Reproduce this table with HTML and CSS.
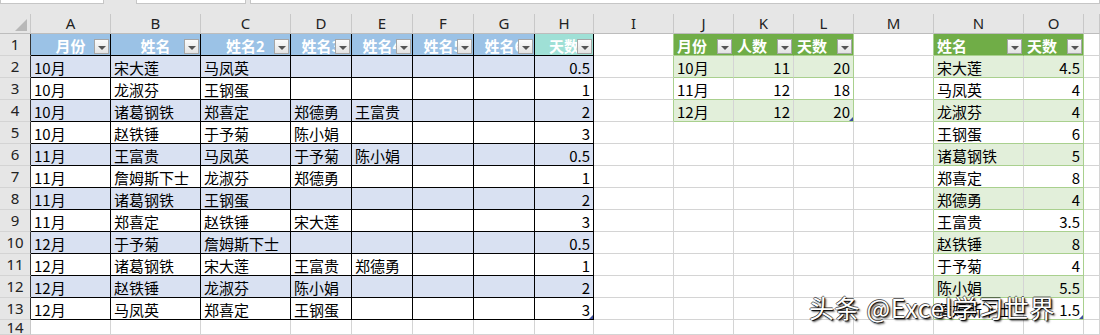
FILE: index.html
```html
<!DOCTYPE html>
<html lang="zh-CN">
<head>
<meta charset="utf-8">
<title>Excel</title>
<link rel="stylesheet" href="styles.css">
</head>
<body>
<div class="topbar"><span class="box b1x"></span><span class="box b2x"></span><span class="box b3x"></span></div>
<div class="sheet">
  <div class="ch corner"><span class="tri"></span></div><div class="ch">A</div><div class="ch">B</div><div class="ch">C</div><div class="ch">D</div><div class="ch">E</div><div class="ch">F</div><div class="ch">G</div><div class="ch">H</div><div class="ch">I</div><div class="ch">J</div><div class="ch">K</div><div class="ch">L</div><div class="ch">M</div><div class="ch">N</div><div class="ch">O</div><div class="ch"></div>

  <div class="rh tk">1</div><div class="k hb">月份<span class="fb"></span></div><div class="k hb">姓名<span class="fb"></span></div><div class="k hb">姓名2<span class="fb"></span></div><div class="k hb">姓名3<span class="fb"></span></div><div class="k hb">姓名4<span class="fb"></span></div><div class="k hb">姓名5<span class="fb"></span></div><div class="k hb">姓名6<span class="fb"></span></div><div class="k ht">天数<span class="fb"></span></div><div class="pg"></div><div class="gh">月份<span class="fb"></span></div><div class="gh">人数<span class="fb"></span></div><div class="gh gl">天数<span class="fb"></span></div><div class="pg"></div><div class="gh">姓名<span class="fb"></span></div><div class="gh gl">天数<span class="fb"></span></div><div></div>

  <div class="rh tk">2</div><div class="k kb">10月</div><div class="k kb">宋大莲</div><div class="k kb">马凤英</div><div class="k kb"></div><div class="k kb"></div><div class="k kb"></div><div class="k kb"></div><div class="k kb n">0.5</div><div class="pg"></div><div class="g gb">10月</div><div class="g gb n">11</div><div class="g gb gl n">20</div><div class="pg"></div><div class="g gb">宋大莲</div><div class="g gb gl n">4.5</div><div></div>

  <div class="rh tk">3</div><div class="k">10月</div><div class="k">龙淑芬</div><div class="k">王钢蛋</div><div class="k"></div><div class="k"></div><div class="k"></div><div class="k"></div><div class="k n">1</div><div class="pg"></div><div class="g">11月</div><div class="g n">12</div><div class="g gl n">18</div><div class="pg"></div><div class="g">马凤英</div><div class="g gl n">4</div><div></div>

  <div class="rh tk">4</div><div class="k kb">10月</div><div class="k kb">诸葛钢铁</div><div class="k kb">郑喜定</div><div class="k kb">郑德勇</div><div class="k kb">王富贵</div><div class="k kb"></div><div class="k kb"></div><div class="k kb n">2</div><div class="pg"></div><div class="g gb">12月</div><div class="g gb n">12</div><div class="g gb gl n mark">20</div><div class="pg"></div><div class="g gb">龙淑芬</div><div class="g gb gl n">4</div><div></div>

  <div class="rh tk">5</div><div class="k">10月</div><div class="k">赵铁锤</div><div class="k">于予菊</div><div class="k">陈小娟</div><div class="k"></div><div class="k"></div><div class="k"></div><div class="k n">3</div><div></div><div></div><div></div><div></div><div class="pg"></div><div class="g">王钢蛋</div><div class="g gl n">6</div><div></div>

  <div class="rh tk">6</div><div class="k kb">11月</div><div class="k kb">王富贵</div><div class="k kb">马凤英</div><div class="k kb">于予菊</div><div class="k kb">陈小娟</div><div class="k kb"></div><div class="k kb"></div><div class="k kb n">0.5</div><div></div><div></div><div></div><div></div><div class="pg"></div><div class="g gb">诸葛钢铁</div><div class="g gb gl n">5</div><div></div>

  <div class="rh tk">7</div><div class="k">11月</div><div class="k">詹姆斯下士</div><div class="k">龙淑芬</div><div class="k">郑德勇</div><div class="k"></div><div class="k"></div><div class="k"></div><div class="k n">1</div><div></div><div></div><div></div><div></div><div class="pg"></div><div class="g">郑喜定</div><div class="g gl n">8</div><div></div>

  <div class="rh tk">8</div><div class="k kb">11月</div><div class="k kb">诸葛钢铁</div><div class="k kb">王钢蛋</div><div class="k kb"></div><div class="k kb"></div><div class="k kb"></div><div class="k kb"></div><div class="k kb n">2</div><div></div><div></div><div></div><div></div><div class="pg"></div><div class="g gb">郑德勇</div><div class="g gb gl n">4</div><div></div>

  <div class="rh tk">9</div><div class="k">11月</div><div class="k">郑喜定</div><div class="k">赵铁锤</div><div class="k">宋大莲</div><div class="k"></div><div class="k"></div><div class="k"></div><div class="k n">3</div><div></div><div></div><div></div><div></div><div class="pg"></div><div class="g">王富贵</div><div class="g gl n">3.5</div><div></div>

  <div class="rh tk">10</div><div class="k kb">12月</div><div class="k kb">于予菊</div><div class="k kb">詹姆斯下士</div><div class="k kb"></div><div class="k kb"></div><div class="k kb"></div><div class="k kb"></div><div class="k kb n">0.5</div><div></div><div></div><div></div><div></div><div class="pg"></div><div class="g gb">赵铁锤</div><div class="g gb gl n">8</div><div></div>

  <div class="rh tk">11</div><div class="k">12月</div><div class="k">诸葛钢铁</div><div class="k">宋大莲</div><div class="k">王富贵</div><div class="k">郑德勇</div><div class="k"></div><div class="k"></div><div class="k n">1</div><div></div><div></div><div></div><div></div><div class="pg"></div><div class="g">于予菊</div><div class="g gl n">4</div><div></div>

  <div class="rh tk">12</div><div class="k kb">12月</div><div class="k kb">赵铁锤</div><div class="k kb">龙淑芬</div><div class="k kb">陈小娟</div><div class="k kb"></div><div class="k kb"></div><div class="k kb"></div><div class="k kb n">2</div><div></div><div></div><div></div><div></div><div class="pg"></div><div class="g gb">陈小娟</div><div class="g gb gl n">5.5</div><div></div>

  <div class="rh tk">13</div><div class="k">12月</div><div class="k">马凤英</div><div class="k">郑喜定</div><div class="k">王钢蛋</div><div class="k"></div><div class="k"></div><div class="k"></div><div class="k n mark">3</div><div></div><div></div><div></div><div></div><div class="pg"></div><div class="g">詹姆斯下士</div><div class="g gl n mark">1.5</div><div></div>

  <div class="rh">14</div><div></div><div></div><div></div><div></div><div></div><div></div><div></div><div></div><div></div><div></div><div></div><div></div><div></div><div></div><div></div><div></div>
</div>
<div class="watermark">头条 @Excel学习世界</div>
</body>
</html>
```
FILE: styles.css
```css
html, body {
  margin: 0;
  padding: 0;
}
body {
  width: 1100px;
  height: 335px;
  overflow: hidden;
  background: #ffffff;
  font-family: "Noto Sans CJK SC", "Noto Sans", sans-serif;
  position: relative;
}

.topbar {
  height: 14px;
  background: #e6e6e6;
  display: flex;
  align-items: flex-start;
  box-sizing: border-box;
}
.box {
  height: 3px;
  background: #ffffff;
  border: 1px solid #c6c6c6;
  border-top: none;
}
.b1x { width: 102px; }
.b2x { width: 108px; margin-left: 32px; }
.b3x { flex: 1; margin-left: 4px; }

.sheet {
  display: grid;
  grid-template-columns: 31px 80px 90px 90px 61px 61px 61px 61px 59px 80px 60px 60px 60px 80px 90px 60px 16px;
  grid-template-rows: 20px repeat(13, 22px) 15px;
}
.sheet > div {
  box-sizing: border-box;
  border-right: 1px solid #d4d4d4;
  border-bottom: 1px solid #d4d4d4;
  display: flex;
  align-items: center;
  padding: 1px 3px 0 3px;
  font-size: 15px;
  line-height: 1;
  white-space: nowrap;
  overflow: hidden;
  color: #000;
  position: relative;
}

/* headers */
.sheet > .ch {
  background: #e6e6e6;
  border-right-color: #c8c8c8;
  border-bottom-color: #bdbdbd;
  justify-content: center;
  font-family: "Noto Sans", sans-serif;
  font-size: 15px;
  color: #222;
  padding: 0;
}
.sheet > .corner {
  justify-content: flex-end;
  align-items: flex-end;
  padding: 0 3px 2px 0;
}
.tri {
  width: 0;
  height: 0;
  border-left: 12px solid transparent;
  border-bottom: 12px solid #b8b8b8;
}
.sheet > .rh {
  background: #e6e6e6;
  border-right-color: #c8c8c8;
  border-bottom-color: #d4d4d4;
  justify-content: center;
  font-family: "Noto Sans", sans-serif;
  font-size: 15px;
  color: #222;
  padding: 0;
}
.sheet > .rh.tk {
  border-right-color: #333;
}

/* table 1 */
.sheet > .k {
  border-right-color: #000;
  border-bottom-color: #000;
}
.sheet > .kb {
  background: #d9e1f2;
}
.sheet > .hb,
.sheet > .ht {
  background: #9bc2e6;
  color: #ffffff;
  font-weight: bold;
  justify-content: center;
}
.sheet > .ht {
  background: #9fe0d6;
}

/* green tables */
.sheet > .pg {
  border-right-color: #a9d08e;
}
.sheet > .gh {
  background: #70ad47;
  color: #ffffff;
  font-weight: bold;
  border-right-color: #70ad47;
  border-bottom-color: #a9d08e;
}
.sheet > .g {
  border-bottom-color: #a9d08e;
}
.sheet > .gb {
  background: #e2efda;
}
.sheet > .gl {
  border-right-color: #a9d08e;
}

.sheet > .n {
  justify-content: flex-end;
}

/* filter button */
.fb {
  position: absolute;
  right: 1px;
  bottom: 1px;
  width: 15px;
  height: 15px;
  box-sizing: border-box;
  border: 1px solid #a6a6a6;
  background: linear-gradient(#fcfcfc, #e3e3e3);
  display: flex;
  align-items: center;
  justify-content: center;
}
.fb::after {
  content: "";
  width: 0;
  height: 0;
  margin-top: 2px;
  border-left: 4px solid transparent;
  border-right: 4px solid transparent;
  border-top: 4px solid #555;
}

/* table resize marker */
.mark::after {
  content: "";
  position: absolute;
  right: 0;
  bottom: 0;
  width: 0;
  height: 0;
  border-left: 4px solid transparent;
  border-bottom: 4px solid #3f4f9f;
}

.watermark {
  position: absolute;
  left: 809px;
  top: 292px;
  font-family: "Noto Sans CJK SC", "Noto Sans", sans-serif;
  font-size: 25px;
  letter-spacing: 0.6px;
  line-height: 30px;
  color: #ffffff;
  white-space: nowrap;
  text-shadow: 1px 1px 1px #000, 2px 2px 2px rgba(0,0,0,0.6), -1px 0 0 rgba(0,0,0,0.6), 0 -1px 0 rgba(0,0,0,0.6);
}
```
